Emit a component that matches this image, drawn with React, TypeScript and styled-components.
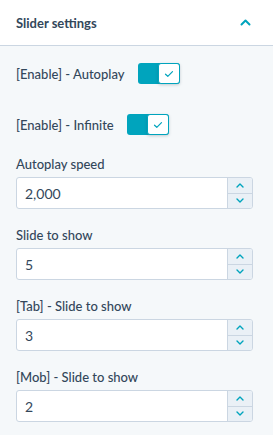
import styled, { createGlobalStyle } from "styled-components";

const GlobalStyle = createGlobalStyle`
  body {
    margin: 0;
    background: #f5f8fa;
    font-family: "Lato", "Noto Sans", sans-serif;
    color: #33475b;
  }
`;

const Panel = styled.div`
  width: 273px;
  min-height: 435px;
  background: #f5f8fa;
`;

const Header = styled.div`
  height: 45px;
  padding: 0 22px 0 16px;
  display: flex;
  align-items: center;
  justify-content: space-between;
  background: #fff;
  border-bottom: 1px solid #cbd6e2;
`;

const Title = styled.div`
  font-size: 13px;
  font-weight: 700;
  color: #33475b;
`;

const Body = styled.div`
  padding: 17px 20px 16px 16px;
  display: flex;
  flex-direction: column;
`;

const ToggleRow = styled.div`
  display: flex;
  align-items: center;
  height: 21px;
  margin-bottom: 30px;
  &:nth-of-type(2) {
    margin-bottom: 21px;
  }
`;

const Label = styled.div`
  font-size: 13px;
  font-weight: 500;
  line-height: 16px;
  color: #33475b;
`;

const Toggle = styled.div`
  margin-left: 13px;
  width: 42px;
  height: 21px;
  display: flex;
  border-radius: 3px;
  background: #00a4bd;
`;

const Knob = styled.div`
  margin-left: auto;
  width: 22px;
  height: 21px;
  box-sizing: border-box;
  background: #fff;
  border: 1px solid #00a4bd;
  border-radius: 3px;
  box-shadow: 0 1px 3px rgba(45, 62, 80, 0.25);
  display: flex;
  align-items: center;
  justify-content: center;
`;

const Field = styled.div`
  display: flex;
  flex-direction: column;
  gap: 5px;
  margin-bottom: 18px;
`;

const InputBox = styled.div`
  height: 32px;
  box-sizing: border-box;
  display: flex;
  background: #fff;
  border: 1px solid #cbd6e2;
  border-radius: 3px;
  overflow: hidden;
`;

const Value = styled.div`
  flex: 1;
  display: flex;
  align-items: center;
  padding-left: 8px;
  font-size: 14px;
  color: #33475b;
`;

const Spinner = styled.div`
  width: 24px;
  display: flex;
  flex-direction: column;
  border-left: 1px solid #cbd6e2;
  background: #eaf0f6;
`;

const SpinButton = styled.div<{ $top?: boolean }>`
  flex: 1;
  display: flex;
  align-items: center;
  justify-content: center;
  border-bottom: ${(p) => (p.$top ? "1px solid #cbd6e2" : "none")};
`;

const Chevron = ({ up, size = 8 }: { up?: boolean; size?: number }) => (
  <svg width={size} height={size / 2 + 1} viewBox="0 0 8 5">
    <path
      d={up ? "M1 4 L4 1 L7 4" : "M1 1 L4 4 L7 1"}
      fill="none"
      stroke="#00a4bd"
      strokeWidth="1.4"
      strokeLinecap="round"
      strokeLinejoin="round"
    />
  </svg>
);

const Check = () => (
  <svg width="10" height="8" viewBox="0 0 10 8">
    <path
      d="M1.5 4.2 L3.8 6.3 L8.5 1.6"
      fill="none"
      stroke="#00a4bd"
      strokeWidth="1.2"
      strokeLinecap="round"
      strokeLinejoin="round"
    />
  </svg>
);

const toggles = ["[Enable] - Autoplay", "[Enable] - Infinite"];

const fields = [
  { label: "Autoplay speed", value: "2,000" },
  { label: "Slide to show", value: "5" },
  { label: "[Tab] - Slide to show", value: "3" },
  { label: "[Mob] - Slide to show", value: "2" },
];

const App: React.FC = () => {
  return (
    <>
      <GlobalStyle />
      <Panel>
        <Header>
          <Title>Slider settings</Title>
          <svg width="11" height="7" viewBox="0 0 11 7">
            <path
              d="M1.5 5.5 L5.5 1.5 L9.5 5.5"
              fill="none"
              stroke="#00a4bd"
              strokeWidth="2"
              strokeLinecap="round"
              strokeLinejoin="round"
            />
          </svg>
        </Header>
        <Body>
          {toggles.map((t) => (
            <ToggleRow key={t}>
              <Label>{t}</Label>
              <Toggle>
                <Knob>
                  <Check />
                </Knob>
              </Toggle>
            </ToggleRow>
          ))}
          {fields.map((f) => (
            <Field key={f.label}>
              <Label>{f.label}</Label>
              <InputBox>
                <Value>{f.value}</Value>
                <Spinner>
                  <SpinButton $top>
                    <Chevron up />
                  </SpinButton>
                  <SpinButton>
                    <Chevron />
                  </SpinButton>
                </Spinner>
              </InputBox>
            </Field>
          ))}
        </Body>
      </Panel>
    </>
  );
};

export default App;
